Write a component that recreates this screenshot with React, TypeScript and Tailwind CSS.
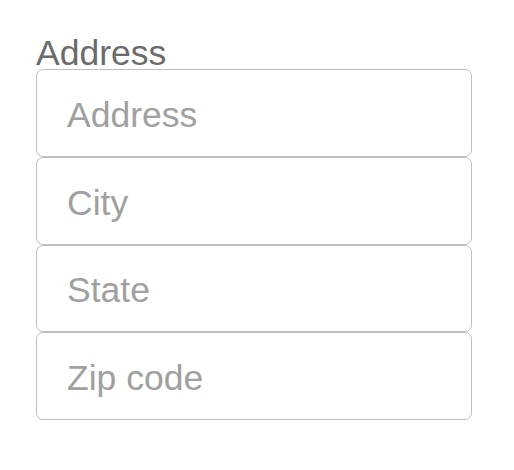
import React from 'react';

const fields = ['Address', 'City', 'State', 'Zip code'];

const App: React.FC = () => {
  return (
    <div className="min-h-[470px] w-[514px] bg-white pl-[36px] pt-[37px] font-['Liberation_Sans',Arial,sans-serif]">
      <div className="w-[436px]">
        <label className="block text-[35.5px] leading-[32px] text-[#6b6b6b]">Address</label>
        <div className="flex flex-col">
          {fields.map((f) => (
            <input
              key={f}
              type="text"
              placeholder={f}
              className="h-[87.75px] w-full rounded-[7px] border border-[#bebebe] bg-white px-[30px] pt-[5px] text-[35.5px] text-[#333] placeholder:text-[#a0a0a0] outline-none"
            />
          ))}
        </div>
      </div>
    </div>
  );
};

export default App;
